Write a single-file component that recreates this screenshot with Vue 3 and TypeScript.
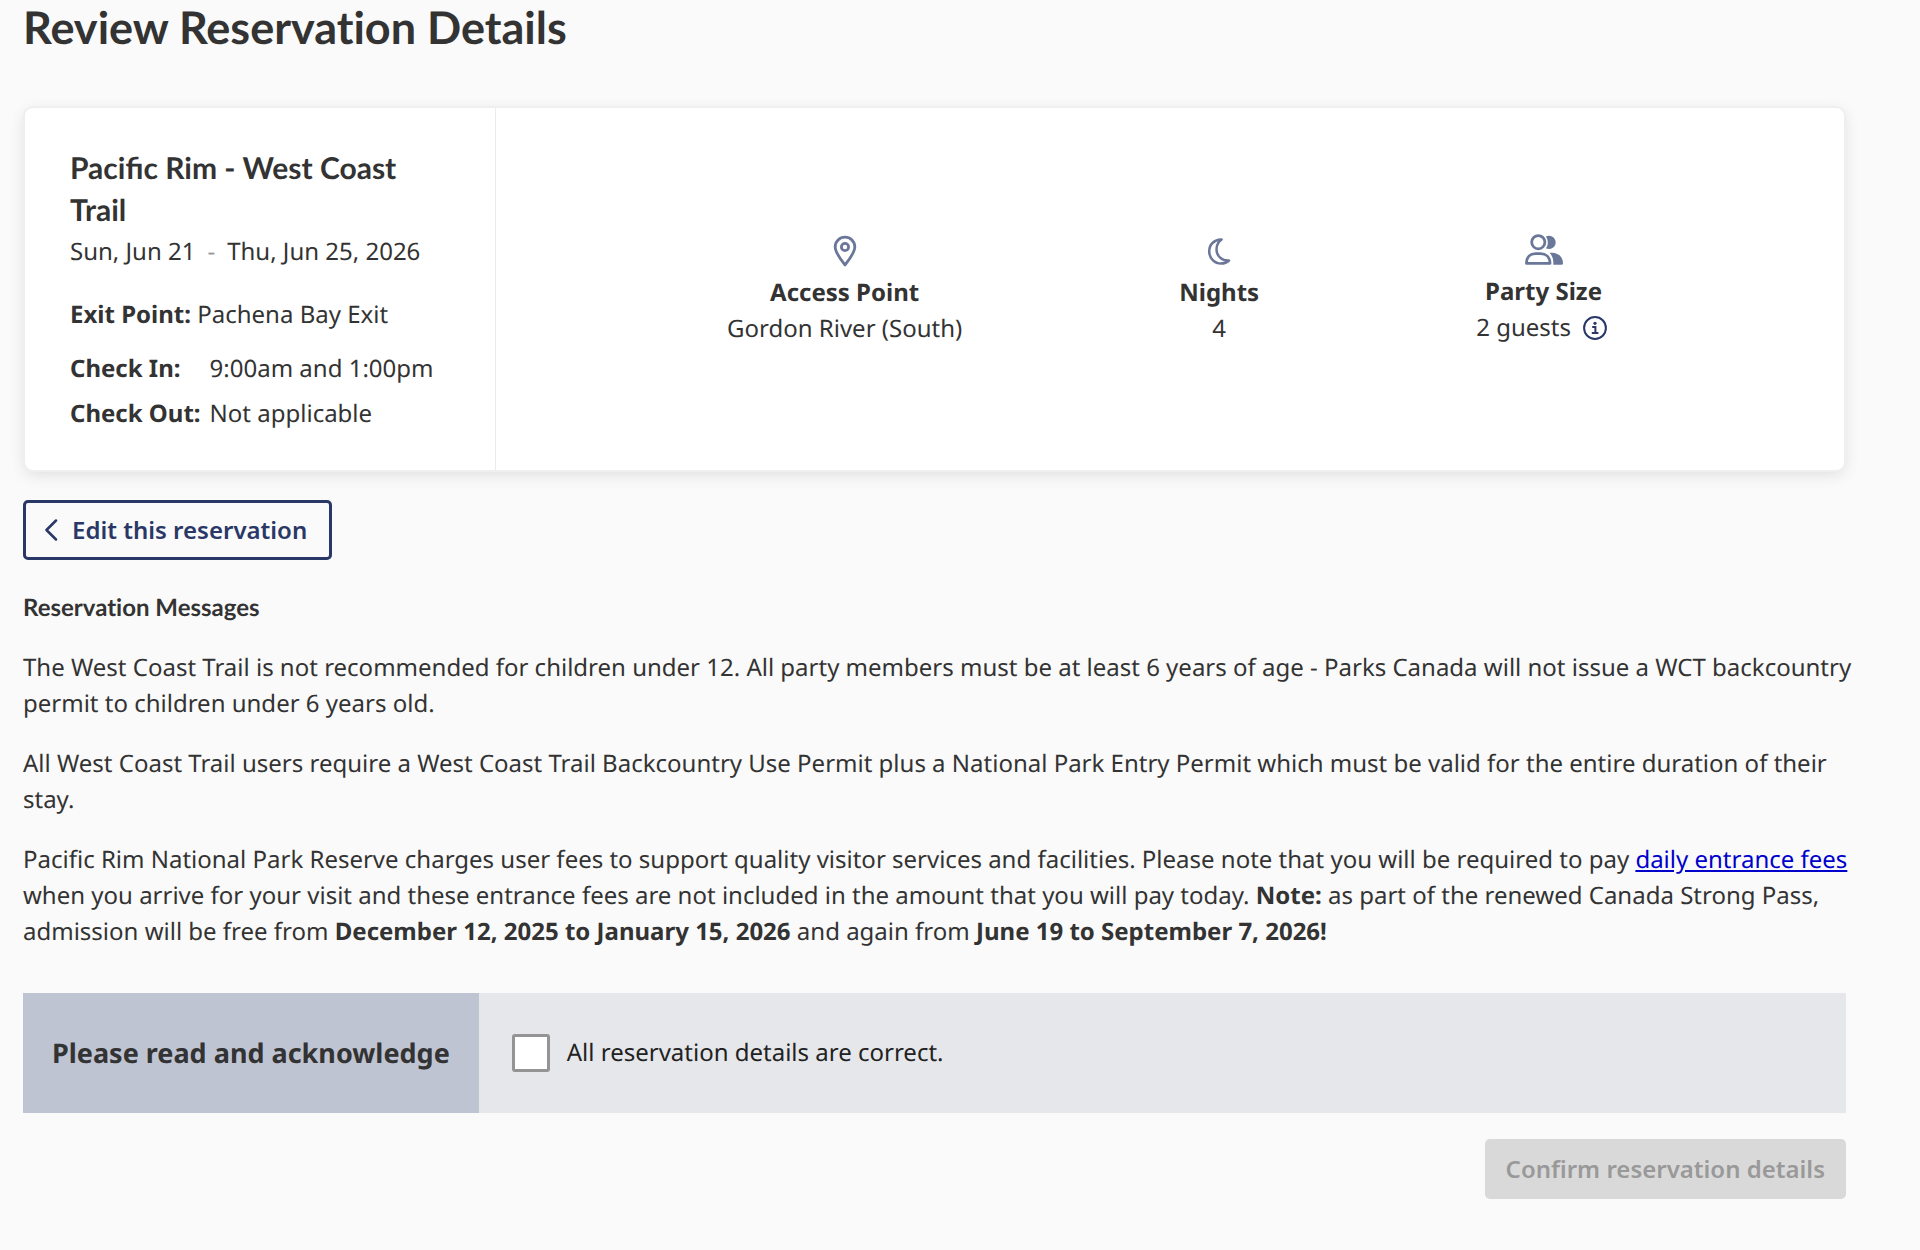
<script setup lang="ts">
import { ref } from 'vue'

const acknowledged = ref(false)
</script>

<template>
  <main class="page">
    <h1 class="title">Review Reservation Details</h1>

    <section class="card">
      <div class="summary">
        <h2 class="park">Pacific Rim - West Coast Trail</h2>
        <p class="dates">
          <span>Sun, Jun 21</span><span class="dash">-</span><span>Thu, Jun 25, 2026</span>
        </p>
        <p class="exit"><strong>Exit Point:</strong> Pachena Bay Exit</p>
        <dl class="times">
          <dt>Check In:</dt>
          <dd>9:00am and 1:00pm</dd>
          <dt>Check Out:</dt>
          <dd>Not applicable</dd>
        </dl>
      </div>

      <div class="facts">
        <div class="fact">
          <svg class="icon" width="24" height="32" viewBox="0 0 24 32" fill="none" stroke="currentColor" aria-hidden="true">
            <path d="M12 30C10.500 28 2.200 18 2.200 12A9.800 9.800 0 0 1 21.800 12C21.800 18 13.500 28 12 30Z" stroke-width="2.800" stroke-linejoin="round" />
            <circle cx="12" cy="12" r="3.600" stroke-width="2.800" />
          </svg>
          <strong>Access Point</strong>
          <span>Gordon River (South)</span>
        </div>
        <div class="fact">
          <svg class="icon" width="24" height="32" viewBox="0 0 24 32" fill="none" stroke="currentColor" aria-hidden="true">
            <path d="M14.600 4.500C7.500 4.200 2.200 9.600 2.200 16.200C2.200 23.300 7.700 28.500 14.200 28.500C17.200 28.500 20 27.400 22 25.500C15 26 9.500 21 9.500 14.600C9.500 10.400 11.500 6.600 14.600 4.500Z" stroke-width="2.500" stroke-linejoin="round" />
          </svg>
          <strong>Nights</strong>
          <span>4</span>
        </div>
        <div class="fact">
          <svg class="icon" width="38" height="32" viewBox="0 0 38 32" aria-hidden="true">
            <g fill="none" stroke="currentColor" stroke-width="2.800">
              <circle cx="13.300" cy="8.200" r="6.600" />
              <path d="M1.500 29.400C1.500 22.500 5.500 19.600 10.500 19.600H15.500C20.500 19.600 25 22.500 25 29.400Z" stroke-linejoin="round" />
            </g>
            <path d="M20.900 2.600A6.600 6.600 0 1 1 20.900 14.200A9.500 9.500 0 0 0 20.900 2.600Z" fill="currentColor" />
            <path d="M24.500 18.700H27C33.500 18.700 38 23.300 38 29.200Q38 30.700 36.500 30.700H28.300C28.600 25.500 27.300 21.300 24.500 18.700Z" fill="currentColor" />
          </svg>
          <strong>Party Size</strong>
          <span class="guests">
            2 guests
            <button class="info" type="button" aria-label="Party details">
              <svg width="24" height="24" viewBox="0 0 24 24" fill="none" stroke="currentColor" aria-hidden="true">
                <circle cx="12" cy="12" r="10.900" stroke-width="2" />
                <circle cx="12" cy="7.300" r="1.600" fill="currentColor" stroke="none" />
                <path d="M9.200 11H12.400V17M8.800 17H15.400" stroke-width="2" />
              </svg>
            </button>
          </span>
        </div>
      </div>
    </section>

    <button class="edit" type="button">
      <svg width="14" height="22" viewBox="0 0 14 22" fill="none" stroke="currentColor" stroke-width="2.500" stroke-linecap="round" stroke-linejoin="round" aria-hidden="true">
        <path d="M12 1.500L2.500 11L12 20.500" />
      </svg>
      Edit this reservation
    </button>

    <section class="messages">
      <h3 class="subtitle">Reservation Messages</h3>
      <p>The West Coast Trail is not recommended for children under 12. All party members must be at least 6 years of age - Parks Canada will not issue a WCT backcountry permit to children under 6 years old.</p>
      <p>All West Coast Trail users require a West Coast Trail Backcountry Use Permit plus a National Park Entry Permit which must be valid for the entire duration of their stay.</p>
      <p>Pacific Rim National Park Reserve charges user fees to support quality visitor services and facilities. Please note that you will be required to pay <a href="#">daily entrance fees</a> when you arrive for your visit and these entrance fees are not included in the amount that you will pay today. <strong>Note:</strong> as part of the renewed Canada Strong Pass, admission will be free from <strong>December 12, 2025 to January 15, 2026</strong> and again from <strong>June 19 to September 7, 2026!</strong></p>
    </section>

    <section class="acknowledge">
      <h3 class="prompt">Please read and acknowledge</h3>
      <div class="choice">
        <input id="details-correct" v-model="acknowledged" type="checkbox" />
        <label for="details-correct">All reservation details are correct.</label>
      </div>
    </section>

    <div class="actions">
      <button class="confirm" type="button" :disabled="!acknowledged">Confirm reservation details</button>
    </div>
  </main>
</template>

<style>
body {
  background: #fafafa;
}
</style>

<style scoped>
.page {
  box-sizing: border-box;
  padding: 0 74px 48px 23px;
  color: #333;
  font: 24px/36px "Noto Sans", sans-serif;
  text-rendering: geometricPrecision;
}
h1, h2, h3, p, dl, dd {
  margin: 0;
}
.title {
  font: 700 45px/54px Lato, sans-serif;
  font-variant-ligatures: none;
}
.card {
  display: flex;
  margin: 54px 2px 30px;
  background: #fff;
  border-radius: 8px;
  box-shadow: 0 0 0 2px #efefef, 0 4px 16px rgba(0, 0, 0, 0.12);
}
.summary {
  box-sizing: border-box;
  flex: 0 0 471px;
  padding: 39px 45px 38px;
  border-right: 1px solid #ebebeb;
}
.park {
  font: 700 30px/42px Lato, sans-serif;
}
.dates {
  margin-top: 3px;
}
.dash {
  margin: 0 12px;
  color: #999;
}
.exit {
  margin-top: 27px;
}
.times {
  display: grid;
  grid-template-columns: max-content 1fr;
  gap: 9px;
  margin-top: 18px;
}
.times dt {
  font-weight: 700;
}
.facts {
  flex: 1;
  display: flex;
  align-items: center;
  justify-content: space-evenly;
  padding: 4px 16px 0 14px;
}
.fact {
  display: flex;
  flex-direction: column;
  align-items: center;
}
.icon {
  display: block;
  margin-bottom: 8px;
  color: #6b7799;
}
.guests {
  display: flex;
  align-items: center;
  gap: 12px;
  padding: 0 4px 3px 0;
}
.info {
  display: flex;
  padding: 0;
  border: 0;
  background: none;
  color: #2a3868;
}
.edit {
  display: flex;
  align-items: center;
  gap: 14px;
  height: 60px;
  padding: 0 22px 0 18px;
  border: 3px solid #2a3868;
  border-radius: 5px;
  background: none;
  color: #2a3868;
  font: 600 24px/36px "Noto Sans", sans-serif;
}
.messages {
  margin: 30px -6px 0 0;
}
.messages p {
  margin-top: 24px;
}
.messages a {
  color: #00c;
}
.subtitle {
  font: 700 24px/36px Lato, sans-serif;
  font-variant-ligatures: none;
}
.acknowledge {
  display: flex;
  min-height: 120px;
  margin-top: 43px;
  background: #e6e7eb;
}
.prompt {
  display: flex;
  align-items: center;
  padding: 0 29px;
  background: #bfc4d3;
  font: 700 27px/36px "Noto Sans", sans-serif;
}
.choice {
  display: flex;
  align-items: center;
  gap: 17px;
  padding-left: 33px;
  color: #222;
}
.choice input {
  appearance: none;
  width: 38px;
  height: 38px;
  margin: 0;
  border: 3px solid #949494;
  border-radius: 3px;
  background: #fff;
}
.choice input:checked {
  background: #2a3868;
}
.actions {
  display: flex;
  justify-content: flex-end;
  margin-top: 26px;
}
.confirm {
  height: 60px;
  padding: 0 21px;
  border: 0;
  border-radius: 5px;
  background: #2a3868;
  color: #fff;
  font: 600 24px/36px "Noto Sans", sans-serif;
}
.confirm:disabled {
  background: #d9d9d9;
  color: #999;
}
</style>
